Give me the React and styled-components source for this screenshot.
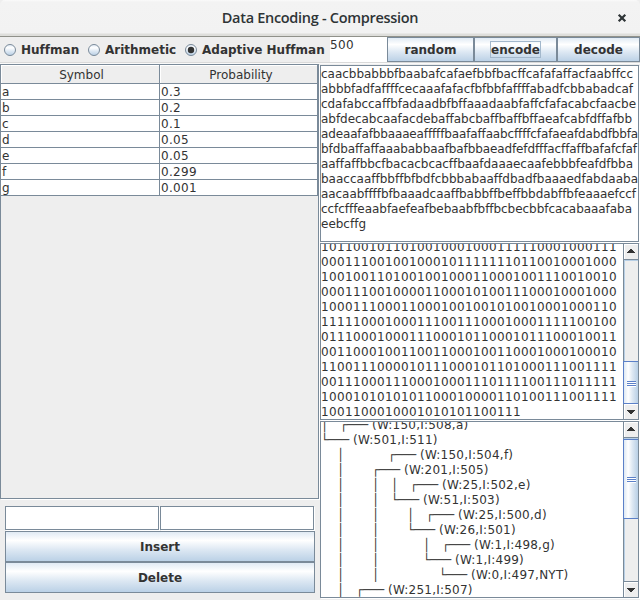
import React from "react";
import styled, { createGlobalStyle, css } from "styled-components";

const EDGE = "#7a8a99";
const PANEL = "#eeeeee";
const BLUE = "#b8cfe5";
const ACCENT = "#5b80c8";
const INK = "#333333";

const GlobalStyle = createGlobalStyle`
  * { box-sizing: border-box; }
  body {
    margin: 0;
    overflow: hidden;
    background: ${PANEL};
    font: 12px/15px "DejaVu Sans", sans-serif;
    font-variant-ligatures: none;
    color: ${INK};
  }
`;

const Window = styled.div`
  width: 640px;
  height: 600px;
  display: flex;
  flex-direction: column;
  background: ${PANEL};
`;

const TitleBar = styled.header`
  position: relative;
  flex: none;
  height: 37px;
  display: flex;
  align-items: center;
  justify-content: center;
  padding-bottom: 1px;
  background: linear-gradient(#fafafa 0, #f3f3f3 2px, #f2f2f2 33px, #dededb 34px, #dededb 36px, #90918a 36px);
  color: #2e3436;
  font: 600 14.5px/20px "Open Sans", "Noto Sans", sans-serif;
  border-radius: 5px 5px 0 0;
`;

const Title = styled.span`
  letter-spacing: ${(p) => p.$spacing}px;
`;

const CloseIcon = styled.svg`
  position: absolute;
  left: 617px;
  top: 13px;
`;

const Toolbar = styled.div`
  flex: none;
  height: 27px;
  display: flex;
  align-items: flex-start;
  border-bottom: 1px solid #fafafa;
  box-shadow: inset 0 -1px #dadada;
`;

const RadioOption = styled.label`
  height: 25px;
  width: ${(p) => p.$width}px;
  padding-left: 4px;
  display: flex;
  align-items: center;
  gap: 5px;
  font-weight: bold;
  white-space: nowrap;
  svg { flex: none; }
`;

const RadioLabel = styled.span`
  padding-top: 1px;
`;

const CountField = styled.div`
  width: 57px;
  height: 25px;
  padding-top: 1px;
  background: #fff;
  letter-spacing: 0.37px;
`;

const Button = styled.button`
  width: ${(p) => p.$width}px;
  height: ${(p) => p.$height || 25}px;
  display: flex;
  align-items: center;
  justify-content: center;
  padding: 2px 0 0;
  border: 1px solid ${EDGE};
  border-radius: 0;
  background: linear-gradient(#dde8f3, #fff 30%, #dde8f3 60%, ${BLUE}) border-box;
  color: ${INK};
  font: bold 12px/15px "DejaVu Sans", sans-serif;
`;

const Focus = styled.span`
  height: 17px;
  margin-top: -2px;
  padding: 2px 1px 0;
  outline: 1px solid #a3b8cc;
  outline-offset: -1px;
`;

const Content = styled.main`
  flex: 1;
  display: grid;
  grid-template-columns: 320px 320px;
`;

const LeftColumn = styled.section`
  display: flex;
  flex-direction: column;
`;

const TablePane = styled.div`
  width: 319px;
  height: 435px;
  border: 1px solid ${EDGE};
  box-shadow: 1px 1px #fff;
`;

const Row = styled.div`
  display: grid;
  grid-template-columns: 159px 158px;
`;

const Cell = styled.div`
  border-right: 1px solid ${EDGE};
  border-bottom: 1px solid ${EDGE};
  ${(p) =>
    p.$header
      ? css`
          height: 19px;
          text-align: center;
          padding: 3px 0 0 ${p.$numeric ? 5 : 3}px;
          box-shadow: inset 1px 1px #fff;
        `
      : css`
          height: 16px;
          background: #fff;
          padding: 1px 0 0 1px;
          letter-spacing: ${p.$numeric ? 0.3 : 0}px;
        `}
`;

const Form = styled.div`
  display: grid;
  grid-template-columns: 154px 154px;
  column-gap: 1px;
  padding: 7px 5px 0;
`;

const TextField = styled.div`
  height: 24px;
  border: 1px solid ${EDGE};
  background: #fff;
  box-shadow: 1px 1px #fff;
  margin-bottom: 1px;
`;

const FormButton = styled(Button)`
  grid-column: 1 / -1;
`;

const RightColumn = styled.section`
  display: flex;
  flex-direction: column;
  gap: 1px;
  padding-top: 1px;
`;

const Pane = styled.div`
  width: 319px;
  height: 177px;
  display: flex;
  border: 1px solid ${EDGE};
  background: #fff;
  box-shadow: 1px 1px #fff;
  overflow: hidden;
`;

const PaneText = styled.div`
  flex: 1;
  min-width: 0;
  overflow: hidden;
  white-space: pre;
`;

const Scrolled = styled.div`
  margin-top: ${(p) => p.$offset}px;
`;

const Line = styled.div`
  height: 15px;
  letter-spacing: ${(p) => p.$spacing || 0}px;
`;

const Space = styled.span`
  display: inline-block;
  width: ${(p) => p.$count * 4}px;
`;

const Branch = styled.span`
  display: inline-block;
  width: 7px;
  letter-spacing: 0;
`;

const ScrollBar = styled.div`
  flex: none;
  width: 15px;
  display: flex;
  flex-direction: column;
  border-left: 1px solid ${EDGE};
  background: ${PANEL};
`;

const Arrow = styled.div`
  height: 16px;
  flex: none;
  padding: ${(p) => (p.$down ? 6 : 5)}px 0 0 3px;
  background: ${PANEL};
  box-shadow: inset 1px 1px #fff;
  border-${(p) => (p.$down ? "top" : "bottom")}: 1px solid ${EDGE};
  svg { display: block; }
`;

const Track = styled.div`
  flex: 1;
  min-height: 0;
  padding-top: ${(p) => p.$before}px;
  box-shadow: inset 1px 1px ${BLUE};
`;

const Thumb = styled.div`
  position: relative;
  height: ${(p) => p.$size}px;
  margin-left: -1px;
  padding: ${(p) => Math.floor((p.$size - 5) / 2)}px 0 0 3px;
  border: 1px solid ${ACCENT};
  border-right: 0;
  background: linear-gradient(90deg, #dde8f3, #fff 30%, #dde8f3 60%, ${BLUE});
  svg { display: block; }
`;

const Radio = ({ checked }) => (
  <svg width="12" height="12" viewBox="0 0 12 12">
    <defs>
      <linearGradient id="radio" x2="0" y2="1">
        <stop offset="0" stopColor="#dde8f3" />
        <stop offset=".3" stopColor="#fff" />
        <stop offset=".6" stopColor="#dde8f3" />
        <stop offset="1" stopColor={BLUE} />
      </linearGradient>
    </defs>
    <circle cx="6" cy="6" r="5.5" fill="url(#radio)" stroke={EDGE} />
    {checked && <circle cx="6" cy="6" r="3.2" fill={INK} />}
  </svg>
);

const Scroll = ({ before, size }) => (
  <ScrollBar>
    <Arrow>
      <svg width="8" height="4" shapeRendering="crispEdges">
        <path d="M3 0h2v1h1v1h1v1h1v1H0V3h1V2h1V1h1z" fill={INK} />
      </svg>
    </Arrow>
    <Track $before={before}>
      <Thumb $size={size}>
        <svg width="9" height="6" shapeRendering="crispEdges">
          <path d="M1 1h8v1H1zM1 3h8v1H1zM1 5h8v1H1z" fill="#fff" />
          <path d="M0 0h9v1H0zM0 2h9v1H0zM0 4h9v1H0z" fill={ACCENT} />
        </svg>
      </Thumb>
    </Track>
    <Arrow $down>
      <svg width="8" height="4" shapeRendering="crispEdges">
        <path d="M0 0h8v1H7v1H6v1H5v1H3V3H2V2H1V1H0z" fill={INK} />
      </svg>
    </Arrow>
  </ScrollBar>
);

const SYMBOLS = [
  ["a", "0.3"],
  ["b", "0.2"],
  ["c", "0.1"],
  ["d", "0.05"],
  ["e", "0.05"],
  ["f", "0.299"],
  ["g", "0.001"],
];

const SOURCE = [
  "caacbbabbbfbaabafcafaefbbfbacffcafafaffacfaabffcc",
  "abbbfadfaffffcecaaafafacfbfbbfaffffabadfcbbabadcaf",
  "cdafabccaffbfadaadbfbffaaadaabfaffcfafacabcfaacbe",
  "abfdecabcaafacdebaffabcbaffbaffbffaeafcabfdffafbb",
  "adeaafafbbaaaeafffffbaafaffaabcffffcfafaeafdabdfbbfa",
  "bfdbaffaffaaababbaafbafbbaeadfefdfffacffaffbafafcfaf",
  "aaffaffbbcfbacacbcacffbaafdaaaecaafebbbfeafdfbba",
  "baaccaaffbbffbfbdfcbbbabaaffdbadfbaaaedfabdaaba",
  "aacaabffffbfbaaadcaaffbabbffbeffbbdabffbfeaaaefccf",
  "ccfcfffeaabfaefeafbebaabfbffbcbecbbfcacabaaafaba",
  "eebcffg",
];

/* Letter advances at 12px; each line is spaced as if they were whole pixels. */
const ADVANCE = { a: 7.354, b: 7.617, c: 6.598, d: 7.617, e: 7.383, f: 4.225, g: 7.617 };

const wholePixelSpacing = (line) =>
  [...line].reduce((sum, ch) => sum + Math.round(ADVANCE[ch]) - ADVANCE[ch], 0) / line.length;

const ENCODED = [
  "1011001011010010001000111110001000111",
  "0001110010010001011111110110010001000",
  "1001001101001001000110001001110010010",
  "0001110010000110001010011100010001000",
  "1000111000110001001001010010001000110",
  "1111100010001110011100010001111100100",
  "0111000100011100010110001011100010011",
  "0011000100110011000100110001000100010",
  "1100111000010111000101101000111001111",
  "0011100011100010001110111100111011111",
  "1000101010101100010000110100111001111",
  "1001100010001010101100111",
];

/* Numbers are runs of spaces; strings are branch glyphs. */
const TREE = [
  [["│", 3, "┌", "─", "─", "─"], "(W:150,I:508,a)"],
  [["└", "─", "─", "─"], "(W:501,I:511)"],
  [[4, "│", 11, "┌", "─", "─", "─"], "(W:150,I:504,f)"],
  [[4, "│", 7, "┌", "─", "─", "─"], "(W:201,I:505)"],
  [[4, "│", 7, "│", 3, "│", 3, "┌", "─", "─", "─"], "(W:25,I:502,e)"],
  [[4, "│", 7, "│", 3, "└", "─", "─", "─"], "(W:51,I:503)"],
  [[4, "│", 7, "│", 7, "│", 3, "┌", "─", "─", "─"], "(W:25,I:500,d)"],
  [[4, "│", 7, "│", 7, "└", "─", "─", "─"], "(W:26,I:501)"],
  [[4, "│", 7, "│", 11, "│", 3, "┌", "─", "─", "─"], "(W:1,I:498,g)"],
  [[4, "│", 7, "│", 11, "└", "─", "─", "─"], "(W:1,I:499)"],
  [[4, "│", 7, "│", 15, "└", "─", "─", "─"], "(W:0,I:497,NYT)"],
  [[4, "│", 3, "┌", "─", "─", "─"], "(W:251,I:507)"],
];

export default function App() {
  return (
    <Window>
      <GlobalStyle />
      <TitleBar>
        <Title $spacing={-0.3}>Data Encoding - Compression</Title>
        <CloseIcon width="10" height="10" viewBox="0 0 10 10">
          <path d="M1.7 1.7L8.3 8.3M8.3 1.7L1.7 8.3" stroke="#2e3436" strokeWidth="2.2" />
        </CloseIcon>
      </TitleBar>
      <Toolbar>
        <RadioOption $width={84}><Radio /><RadioLabel>Huffman</RadioLabel></RadioOption>
        <RadioOption $width={97}><Radio /><RadioLabel>Arithmetic</RadioLabel></RadioOption>
        <RadioOption $width={149}><Radio checked /><RadioLabel>Adaptive Huffman</RadioLabel></RadioOption>
        <CountField>500</CountField>
        <Button $width={87}>random</Button>
        <Button $width={83}><Focus>encode</Focus></Button>
        <Button $width={83}>decode</Button>
      </Toolbar>
      <Content>
        <LeftColumn>
          <TablePane>
            <Row>
              <Cell $header>Symbol</Cell>
              <Cell $header $numeric>Probability</Cell>
            </Row>
            {SYMBOLS.map(([symbol, probability]) => (
              <Row key={symbol}>
                <Cell>{symbol}</Cell>
                <Cell $numeric>{probability}</Cell>
              </Row>
            ))}
          </TablePane>
          <Form>
            <TextField />
            <TextField />
            <FormButton $width={310} $height={31}>Insert</FormButton>
            <FormButton $width={310} $height={31}>Delete</FormButton>
          </Form>
        </LeftColumn>
        <RightColumn>
          <Pane>
            <PaneText>
              <Scrolled $offset={1}>
                {SOURCE.map((line, i) => (
                  <Line key={i} $spacing={wholePixelSpacing(line)}>{line}</Line>
                ))}
              </Scrolled>
            </PaneText>
          </Pane>
          <Pane>
            <PaneText>
              <Scrolled $offset={-4}>
                {ENCODED.map((line, i) => <Line key={i} $spacing={0.365}>{line}</Line>)}
              </Scrolled>
            </PaneText>
            <Scroll before={101} size={43} />
          </Pane>
          <Pane>
            <PaneText>
              <Scrolled $offset={-4}>
                {TREE.map(([branches, label], i) => (
                  <Line key={i} $spacing={0.23}>
                    {branches.map((b, k) =>
                      typeof b === "number" ? <Space key={k} $count={b} /> : <Branch key={k}>{b}</Branch>
                    )}
                    <Space $count={1} />
                    {label}
                  </Line>
                ))}
              </Scrolled>
            </PaneText>
            <Scroll before={1} size={80} />
          </Pane>
        </RightColumn>
      </Content>
    </Window>
  );
}
